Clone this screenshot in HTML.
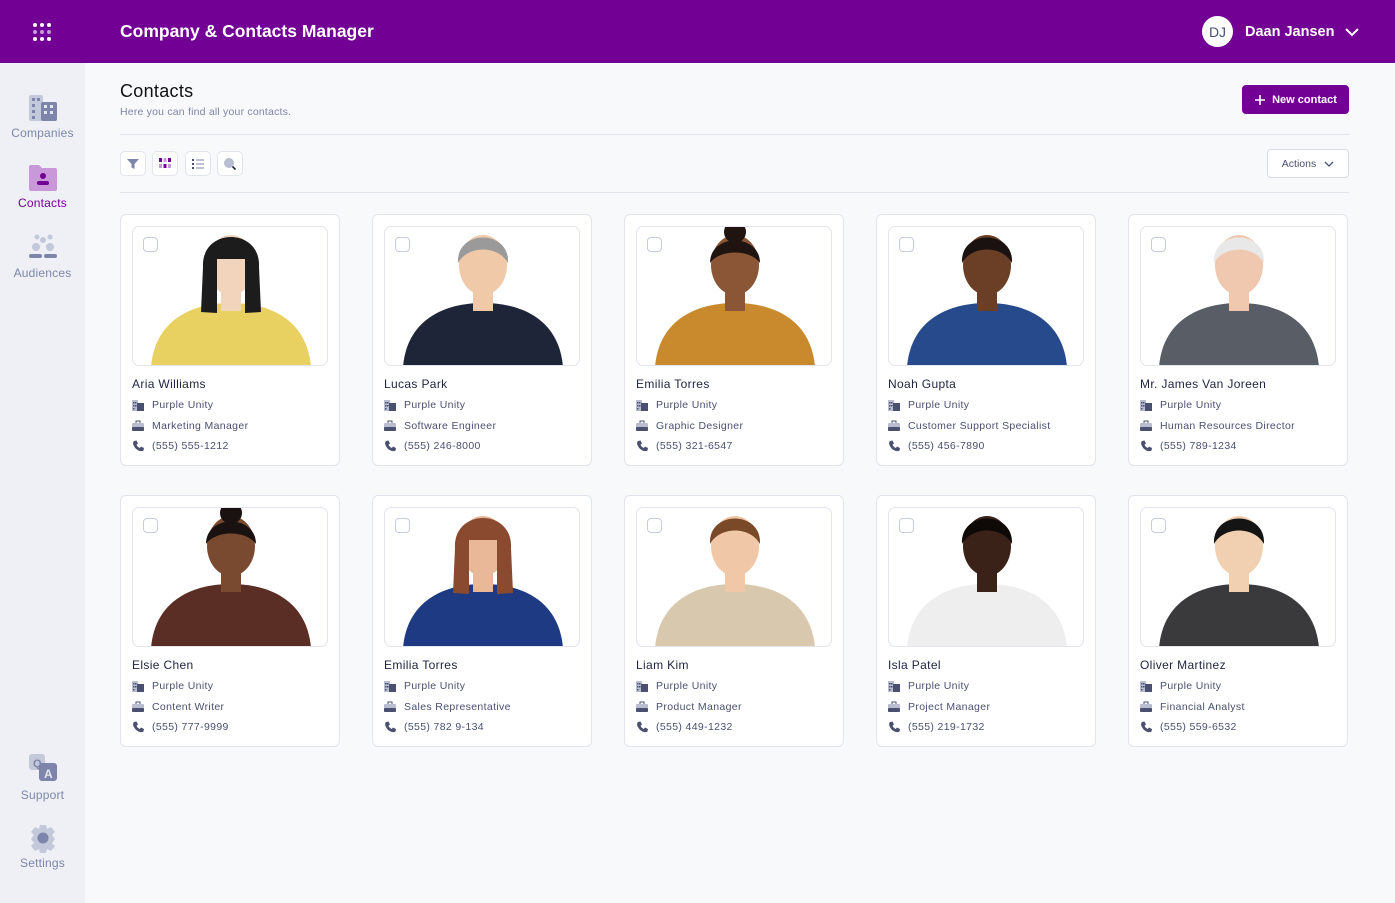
<!DOCTYPE html>
<html><head><meta charset="utf-8">
<style>
*{box-sizing:border-box;margin:0;padding:0}
body{width:1395px;height:903px;overflow:hidden;font-family:"Liberation Sans",sans-serif;background:#f8f9fb;position:relative}
.top{position:absolute;left:0;top:0;width:1395px;height:63px;background:#730094}
.top h1{position:absolute;left:120px;top:21px;color:#fff;font-size:17.5px;font-weight:bold}
.dots{position:absolute;left:33px;top:23px;width:20px;height:18px}
.dots i{position:absolute;width:4px;height:4px;border-radius:50%;background:#fff}
.user{position:absolute;left:1202px;top:16px;display:flex;align-items:center}
.av{width:31px;height:31px;border-radius:50%;background:#fff;color:#4a5070;font-size:14px;display:flex;align-items:center;justify-content:center}
.user span{color:#fff;font-weight:bold;font-size:14.5px;margin-left:12px}
.side{position:absolute;left:0;top:63px;width:85px;height:840px;background:#eef0f5}
.nav{position:absolute;left:0;width:85px;text-align:center;font-size:12px;color:#7d86aa;letter-spacing:.2px}
.nav svg{display:block;margin:0 auto 3px}
.main h2{position:absolute;left:120px;top:81px;font-size:18px;font-weight:normal;color:#111;letter-spacing:.3px}
.sub{position:absolute;left:120px;top:106px;font-size:10.5px;color:#7d86aa;letter-spacing:.2px}
.hr{position:absolute;left:120px;width:1229px;height:1px;background:#e4e6ee}
.btn{position:absolute;left:1242px;top:85px;width:107px;height:29px;background:#730094;border-radius:4px;color:#fff;font-size:11px;font-weight:bold;display:flex;align-items:center;justify-content:center;gap:6px}
.act{position:absolute;left:1267px;top:149px;width:82px;height:29px;border:1px solid #d8dbe6;background:#fff;border-radius:4px;font-size:10.5px;color:#4a5070;display:flex;align-items:center;justify-content:center;gap:8px}
.tb{position:absolute;top:151px;width:26px;height:25px;border:1px solid #e2e4ee;border-radius:5px;background:#fff;display:flex;align-items:center;justify-content:center}
.card{position:absolute;width:220px;height:252px;background:#fff;border:1px solid #e2e4ee;border-radius:6px}
.img{position:absolute;left:11px;top:11px;width:196px;height:140px;border:1px solid #e2e4ee;border-radius:7px;overflow:hidden}
.img svg{position:absolute;left:0;top:0}
.cb{position:absolute;left:10px;top:10px;width:15px;height:15px;border:1px solid #c8ccdc;border-radius:4px;background:#fff;z-index:2}
.nm{position:absolute;left:11px;top:162px;font-size:12px;color:#1e2340;letter-spacing:.35px}
.ln{position:absolute;left:11px;font-size:10.5px;color:#4a5070;display:flex;align-items:center;gap:8px;letter-spacing:.35px}
.ln svg{width:12px;height:12px}
</style></head><body>
<div class="top">
<div class="dots"><i style="left:0;top:0"></i><i style="left:7px;top:0"></i><i style="left:14px;top:0"></i><i style="left:0;top:7px;opacity:.6"></i><i style="left:7px;top:7px;opacity:.6"></i><i style="left:14px;top:7px;opacity:.6"></i><i style="left:0;top:14px"></i><i style="left:7px;top:14px"></i><i style="left:14px;top:14px"></i></div>
<h1>Company &amp; Contacts Manager</h1>
<div class="user"><div class="av">DJ</div><span>Daan Jansen</span><svg width="16" height="10" style="margin-left:10px" viewBox="0 0 16 10"><path d="M2 2l6 6 6-6" stroke="#fff" stroke-width="2" fill="none"/></svg></div>
</div>
<div class="side">
<div class="nav" style="top:30px"><svg width="30" height="30" viewBox="0 0 30 30"><rect x="1" y="2" width="14" height="26" rx="2" fill="#c3c8da"/><rect x="13" y="9" width="16" height="19" rx="2" fill="#7d86aa"/><g fill="#7d86aa"><rect x="4" y="5" width="3" height="3"/><rect x="9" y="5" width="3" height="3"/><rect x="4" y="11" width="3" height="3"/><rect x="4" y="17" width="3" height="3"/><rect x="4" y="23" width="3" height="3"/></g><g fill="#e4e6f0"><rect x="16" y="12" width="3" height="3"/><rect x="22" y="12" width="3" height="3"/><rect x="16" y="18" width="3" height="3"/><rect x="22" y="18" width="3" height="3"/></g></svg>Companies</div>
<div class="nav" style="top:100px;color:#730094"><svg width="30" height="30" viewBox="0 0 30 30"><path d="M1 4a2 2 0 012-2h8l3 3h13a2 2 0 012 2v19a2 2 0 01-2 2H3a2 2 0 01-2-2z" fill="#c898d8"/><circle cx="15" cy="13" r="3" fill="#730094"/><rect x="9" y="18" width="12" height="4" rx="2" fill="#730094"/></svg>Contacts</div>
<div class="nav" style="top:168px"><svg width="32" height="32" viewBox="0 0 32 32"><circle cx="10" cy="6" r="2.5" fill="#c3c8da"/><circle cx="16" cy="9" r="3" fill="#c3c8da"/><circle cx="23" cy="6" r="2.5" fill="#c3c8da"/><circle cx="9" cy="16" r="4" fill="#c3c8da"/><circle cx="23" cy="16" r="4" fill="#c3c8da"/><rect x="2" y="23" width="13" height="4" rx="2" fill="#7d86aa"/><rect x="17" y="23" width="13" height="4" rx="2" fill="#7d86aa"/></svg>Audiences</div>
<div class="nav" style="top:690px"><svg width="32" height="32" viewBox="0 0 32 32"><rect x="2" y="1" width="16" height="16" rx="3" fill="#c3c8da"/><rect x="12" y="10" width="18" height="18" rx="3" fill="#7d86aa"/><text x="6" y="14" font-size="11" font-weight="bold" fill="#7d86aa" font-family="Liberation Sans">Q</text><text x="17" y="25" font-size="12" font-weight="bold" fill="#e4e6f0" font-family="Liberation Sans">A</text></svg>Support</div>
<div class="nav" style="top:760px"><svg width="30" height="30" viewBox="0 0 30 30"><path d="M12 2h6l1 4 4-2 4 5-3 3 3 4-3 4 3 3-4 5-4-2-1 4h-6l-1-4-4 2-4-5 3-3-3-4 3-4-3-3 4-5 4 2z" fill="#c3c8da"/><circle cx="15" cy="15" r="5.5" fill="#7d86aa"/></svg>Settings</div>
</div>
<div class="main">
<h2>Contacts</h2>
<div class="sub">Here you can find all your contacts.</div>
<div class="btn"><svg width="12" height="12" viewBox="0 0 12 12"><path d="M6 1v10M1 6h10" stroke="#fff" stroke-width="1.6"/></svg>New contact</div>
<div class="hr" style="top:134px"></div>
<div class="tb" style="left:120px"><svg width="14" height="14" viewBox="0 0 14 14"><path d="M1 2h12L8.5 7v5l-3-1.5V7z" fill="#7d86aa"/></svg></div>
<div class="tb" style="left:152px"><svg width="12" height="12" viewBox="0 0 12 12" fill="#730094"><rect x="0" y="0" width="3" height="4"/><rect x="4.5" y="0" width="3" height="4" fill="#c898d8"/><rect x="9" y="0" width="3" height="4"/><rect x="0" y="6" width="3" height="4" fill="#c898d8"/><rect x="4.5" y="6" width="3" height="4"/><rect x="9" y="6" width="3" height="4" fill="#c898d8"/></svg></div>
<div class="tb" style="left:185px"><svg width="14" height="12" viewBox="0 0 14 12"><g fill="#4a5070"><rect x="1" y="1" width="2" height="2"/><rect x="1" y="5" width="2" height="2"/><rect x="1" y="9" width="2" height="2"/></g><g fill="#7d86aa"><rect x="5" y="1.5" width="8" height="1"/><rect x="5" y="5.5" width="8" height="1"/><rect x="5" y="9.5" width="8" height="1"/></g></svg></div>
<div class="tb" style="left:217px"><svg width="14" height="14" viewBox="0 0 14 14"><circle cx="6" cy="6" r="5" fill="#b8bdd0"/><path d="M9.5 9.5l3 3" stroke="#1e2340" stroke-width="1.6"/></svg></div>
<div class="act">Actions<svg width="10" height="6" viewBox="0 0 10 6"><path d="M1 1l4 4 4-4" stroke="#4a5070" stroke-width="1.3" fill="none"/></svg></div>
<div class="hr" style="top:192px"></div>
</div>

<svg width="0" height="0" style="position:absolute">
<defs>
<symbol id="ib" viewBox="0 0 12 12"><rect x="0" y="1" width="6" height="11" fill="#b8bdd0"/><rect x="5" y="4" width="7" height="8" fill="#4a5070"/><g fill="#4a5070"><rect x="1" y="3" width="1.5" height="1.5"/><rect x="3" y="3" width="1.5" height="1.5"/><rect x="1" y="6" width="1.5" height="1.5"/><rect x="3" y="6" width="1.5" height="1.5"/><rect x="1" y="9" width="1.5" height="1.5"/></g></symbol>
<symbol id="ij" viewBox="0 0 12 12"><rect x="4" y="1" width="4" height="3" fill="none" stroke="#4a5070" stroke-width="1"/><rect x="0" y="3" width="12" height="8" rx="1" fill="#b8bdd0"/><rect x="0" y="7" width="12" height="4" rx="1" fill="#4a5070"/></symbol>
<symbol id="ip" viewBox="0 0 12 12"><path d="M2 1l2.5-.5 1.5 3-1.5 1.2c.8 1.6 1.7 2.5 3.3 3.3L9 6.5l3 1.5-.5 2.5C10 12 5 11 2.5 7 .5 4 1 2 2 1z" fill="#4a5070"/></symbol>
</defs></svg>

<div id="cards"></div>
<script>
const P=[
["Aria Williams","Marketing Manager","(555) 555-1212","#e8d160","#f2d3bc","#1c1c1c","long"],
["Lucas Park","Software Engineer","(555) 246-8000","#1f2538","#f0c9a8","#9a9a9a","short"],
["Emilia Torres","Graphic Designer","(555) 321-6547","#c98a2e","#8a5636","#1f1410","bun"],
["Noah Gupta","Customer Support Specialist","(555) 456-7890","#264a8c","#6b3e26","#1a1210","short"],
["Mr. James Van Joreen","Human Resources Director","(555) 789-1234","#585d66","#f0c8b0","#e8e8e8","short"],
["Elsie Chen","Content Writer","(555) 777-9999","#5a2e24","#7a4a30","#1a1210","bun"],
["Emilia Torres","Sales Representative","(555) 782 9-134","#1e3a82","#e8b898","#8a4a30","long"],
["Liam Kim","Product Manager","(555) 449-1232","#d8c8ae","#f0c8a8","#7a4a28","short"],
["Isla Patel","Project Manager","(555) 219-1732","#eeeeee","#3a2218","#0f0a08","short"],
["Oliver Martinez","Financial Analyst","(555) 559-6532","#3a3a3c","#f0d0b0","#141414","short"]];
let h="";
P.forEach((p,i)=>{const c=i%5,r=Math.floor(i/5);const x=120+c*252,y=214+r*281;
let hair="";
if(p[6]=="long")hair=`<path d="M70 40 C68 0 128 0 126 40 L128 85 L112 86 L112 32 L84 32 L84 86 L68 85Z" fill="${p[5]}"/>`;
else if(p[6]=="bun")hair=`<circle cx="98" cy="5" r="11" fill="${p[5]}"/><path d="M73 36 C73 6 123 6 123 36 C113 22 83 22 73 36Z" fill="${p[5]}"/>`;
else hair=`<path d="M73 36 C71 2 125 2 123 36 C113 18 83 18 73 36Z" fill="${p[5]}"/>`;
h+=`<div class="card" style="left:${x}px;top:${y}px"><div class="img"><div class="cb"></div><svg width="196" height="140" viewBox="0 0 196 140">
<path d="M18 140 C22 92 60 76 98 76 C136 76 174 92 178 140Z" fill="${p[3]}"/>
<rect x="88" y="60" width="20" height="24" fill="${p[4]}"/>
<ellipse cx="98" cy="38" rx="24" ry="30" fill="${p[4]}"/>${hair}</svg></div>
<div class="nm">${p[0]}</div>
<div class="ln" style="top:184px"><svg><use href="#ib"/></svg>Purple Unity</div>
<div class="ln" style="top:205px"><svg><use href="#ij"/></svg>${p[1]}</div>
<div class="ln" style="top:225px"><svg><use href="#ip"/></svg>${p[2]}</div></div>`;});
document.getElementById("cards").innerHTML=h;
</script>
</body></html>
